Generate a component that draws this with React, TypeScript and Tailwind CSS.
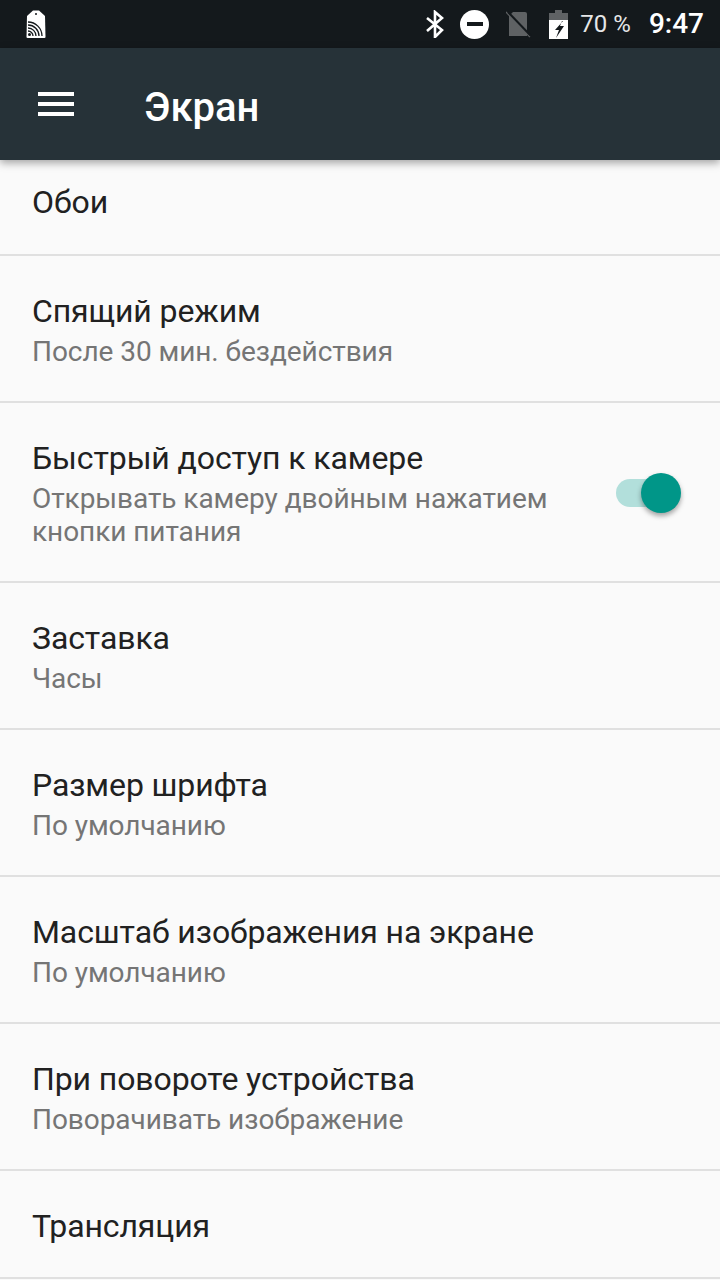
import React from "react";

const Row = ({ title, sub, h, toggle }: { title: string; sub?: React.ReactNode; h: string; toggle?: boolean }) => (
  <div className={`flex items-center pl-8 pr-[39px] border-b-2 border-[#e0e0e0] ${h}`}>
    <div className="flex-1 min-w-0">
      <div className="text-[32px] leading-[41px] tracking-[-0.1px] text-[#212121]">{title}</div>
      {sub && <div className="mt-[3px] text-[28px] leading-[33px] tracking-[-0.06px] text-[#757575]">{sub}</div>}
    </div>
    {toggle && (
      <div className="relative w-[65px] h-[40px] shrink-0">
        <div className="absolute left-0 top-[6px] w-[56px] h-[28px] rounded-full bg-[#b2dfdb]" />
        <div className="absolute right-0 top-0 w-[40px] h-[40px] rounded-full bg-[#009688] shadow-[0_3px_5px_rgba(0,0,0,0.35)]" />
      </div>
    )}
  </div>
);

export default function App() {
  return (
    <div className="w-[720px] h-[1280px] overflow-hidden bg-[#fafafa] font-['Roboto',sans-serif] flex flex-col">
      <div className="h-[48px] shrink-0 bg-[#14191c] flex items-center pl-[26px] pr-[16px] text-white">
        <svg width="20" height="28" viewBox="0 0 20 28" fill="none">
          <path d="M1 6 L7 0.5 H13 L19 6 L19.5 27 Q19.5 28 18.5 28 L1.5 28 Q0.5 28 0.5 27 Z" fill="#fff" />
          <circle cx="10" cy="4" r="1" fill="#14191c" />
          <g stroke="#14191c" strokeWidth="1.3" fill="none">
            <path d="M2 12 A14 14 0 0 1 16 26" />
            <path d="M2 15 A11 11 0 0 1 13 26" />
            <path d="M2 18 A8 8 0 0 1 10 26" />
            <path d="M2 21 A5 5 0 0 1 7 26" />
          </g>
          <circle cx="3.5" cy="24.5" r="1.5" fill="#14191c" />
        </svg>
        <div className="flex-1" />
        <svg width="20" height="28" viewBox="0 0 20 28" fill="none" stroke="#fff" strokeWidth="2.6" className="mr-[15px]">
          <path d="M2 8 L17 20 L10 27 L10 2 L17 8 L2 21" />
        </svg>
        <div className="relative w-[29px] h-[29px] rounded-full bg-white mr-[17px] flex items-center justify-center">
          <div className="w-[16px] h-[4px] bg-[#14191c]" />
        </div>
        <svg width="26" height="28" viewBox="0 0 26 28" className="mr-[17px]">
          <path d="M7 2 H19 Q21 2 21 4 V26 H3 V6 Z" fill="#5f6264" />
          <path d="M0 2 L24 27" stroke="#5f6264" strokeWidth="1.5" />
          <path d="M2 2 L25 26" stroke="#14191c" strokeWidth="2" />
        </svg>
        <svg width="20" height="29" viewBox="0 0 20 29" className="mr-[11px]">
          <path d="M6 0 H13 V3 H19 V11 H0 V3 H6 Z" fill="#5f6264" />
          <path d="M0 10 H19 V29 H0 Z" fill="#fff" />
          <path d="M14 11 L6 20 H10 L7 28 L15 16 H11 L13 11 Z" fill="#14191c" />
        </svg>
        <span className="text-[24px] leading-none text-[#e6e7e8] mr-[18px]">70 %</span>
        <span className="text-[28px] leading-none font-medium">9:47</span>
      </div>
      <div className="h-[112px] shrink-0 bg-[#263238] flex items-center pl-[38px] shadow-[0_3px_8px_rgba(0,0,0,0.35)] z-10 relative">
        <div className="w-[36px] flex flex-col gap-[6px]">
          <div className="h-[4px] bg-white" />
          <div className="h-[4px] bg-white" />
          <div className="h-[4px] bg-white" />
        </div>
        <div className="ml-[70px] text-[40px] font-medium text-white leading-none pt-[8px]">Экран</div>
      </div>
      <Row title="Обои" h="h-[96px] pb-[10px]" />
      <Row title="Спящий режим" sub="После 30 мин. бездействия" h="h-[147px] pt-[2px]" />
      <Row title="Быстрый доступ к камере" sub={<>Открывать камеру двойным нажатием<br />кнопки питания</>} h="h-[180px] pt-[1px]" toggle />
      <Row title="Заставка" sub="Часы" h="h-[147px] pt-[2px]" />
      <Row title="Размер шрифта" sub="По умолчанию" h="h-[147px] pt-[2px]" />
      <Row title="Масштаб изображения на экране" sub="По умолчанию" h="h-[147px] pt-[2px]" />
      <Row title="При повороте устройства" sub="Поворачивать изображение" h="h-[147px] pt-[2px]" />
      <Row title="Трансляция" h="h-[108px] pt-[4px]" />
    </div>
  );
}
